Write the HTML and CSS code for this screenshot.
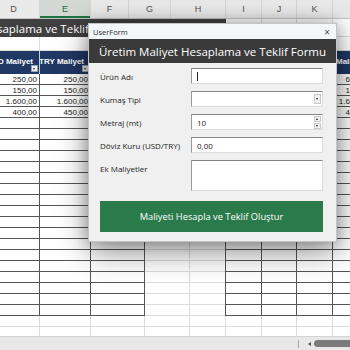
FILE: index.html
```html
<!DOCTYPE html>
<html>
<head>
    <title>Maliyet Hesaplama</title>
    <link rel="stylesheet" href="styles.css">
</head>

<body>
    <div class="sheet">
        <div class="col-heads">
            <div class="ch w-d">D</div>
            <div class="ch w-e selected">E</div>
            <div class="ch w-f">F</div>
            <div class="ch w-g">G</div>
            <div class="ch w-h">H</div>
            <div class="ch w-i">I</div>
            <div class="ch w-j">J</div>
            <div class="ch w-k">K</div>
            <div class="ch w-l">L</div>
        </div>

        <div class="grid">
            <!-- merged title row -->
            <div class="title-cell"><span>Üretim Maliyet Hesaplama ve Teklif Formu</span></div>
            <div class="c"></div>
            <div class="c"></div>
            <div class="c"></div>
            <div class="c"></div>

            <!-- blank row -->
            <div class="c"></div>
            <div class="c"></div>
            <div class="c"></div>
            <div class="c"></div>
            <div class="c"></div>
            <div class="c"></div>
            <div class="c"></div>
            <div class="c"></div>
            <div class="c"></div>

            <!-- table headers -->
            <div class="th">USD Maliyet<span class="filter"></span></div>
            <div class="th">TRY Maliyet<span class="filter"></span></div>
            <div class="th">Toplam<span class="filter"></span></div>
            <div class="c"></div>
            <div class="c edge"></div>
            <div class="th">Ürün<span class="filter"></span></div>
            <div class="th">Metraj<span class="filter"></span></div>
            <div class="th">Kur<span class="filter"></span></div>
            <div class="th left">Maliyet<span class="filter"></span></div>

            <!-- data rows -->
            <div class="c t num">250,00</div>
            <div class="c t num">250,00</div>
            <div class="c t num"></div>
            <div class="c"></div>
            <div class="c edge"></div>
            <div class="c t"></div>
            <div class="c t"></div>
            <div class="c t"></div>
            <div class="c t num">660,00</div>

            <div class="c t num">150,00</div>
            <div class="c t num">150,00</div>
            <div class="c t num"></div>
            <div class="c"></div>
            <div class="c edge"></div>
            <div class="c t"></div>
            <div class="c t"></div>
            <div class="c t"></div>
            <div class="c t num">150,00</div>

            <div class="c t num">1.600,00</div>
            <div class="c t num">1.600,00</div>
            <div class="c t num"></div>
            <div class="c"></div>
            <div class="c edge"></div>
            <div class="c t"></div>
            <div class="c t"></div>
            <div class="c t"></div>
            <div class="c t num">1.600,00</div>

            <div class="c t num">400,00</div>
            <div class="c t num">450,00</div>
            <div class="c t num"></div>
            <div class="c"></div>
            <div class="c edge"></div>
            <div class="c t"></div>
            <div class="c t"></div>
            <div class="c t"></div>
            <div class="c t num">400,00</div>

            <!-- empty bordered rows -->
            <div class="c t fill"></div>
            <div class="c t fill"></div>
            <div class="c t fill"></div>
            <div class="c fill-light"></div>
            <div class="c edge fill-light"></div>
            <div class="c t fill"></div>
            <div class="c t fill"></div>
            <div class="c t fill"></div>
            <div class="c t fill"></div>

            <!-- plain grid below the tables -->
            <div class="c fill-light"></div>
            <div class="c fill-light"></div>
            <div class="c fill-light"></div>
            <div class="c fill-light"></div>
            <div class="c fill-light"></div>
            <div class="c fill-light"></div>
            <div class="c fill-light"></div>
            <div class="c fill-light"></div>
            <div class="c fill-light"></div>
        </div>
    </div>

    <div class="statusbar">
        <span class="sep"></span>
        <span class="arrow"></span>
        <span class="thumb"></span>
    </div>

    <!-- VBA UserForm window over the sheet -->
    <div class="userform">
        <div class="uf-caption">
            <span>UserForm</span>
            <span class="uf-close">×</span>
        </div>
        <div class="uf-header">Üretim Maliyet Hesaplama ve Teklif Formu</div>
        <div class="uf-body">
            <div class="uf-fields">
                <label>Ürün Adı</label>
                <div class="box"><span class="caret"></span></div>

                <label>Kumaş Tipi</label>
                <div class="box"><span class="drop-btn"></span></div>

                <label>Metraj (mt)</label>
                <div class="box">10
                    <span class="spin">
                        <span class="spin-up"></span>
                        <span class="spin-down"></span>
                    </span>
                </div>

                <label>Döviz Kuru (USD/TRY)</label>
                <div class="box">0,00</div>

                <label class="top">Ek Maliyetler</label>
                <div class="box"></div>
            </div>
            <div class="uf-button">Maliyeti Hesapla ve Teklif Oluştur</div>
        </div>
    </div>
</body>
</html>
```

FILE: styles.css
```css
body {
    margin: 0;
    width: 350px;
    height: 350px;
    overflow: hidden;
    position: relative;
    background: #fff;
    font-family: "Liberation Sans", Arial, sans-serif;
}

.sheet {
    height: 336px;
    width: 380px;
    margin-left: -12px;
    overflow: hidden;
}

/* column letters */
.col-heads {
    display: flex;
    height: 19px;
    background: #e9e9e9;
    border-bottom: 1px solid #c4c4c4;
    box-sizing: border-box;
}

.ch {
    display: flex;
    align-items: center;
    justify-content: center;
    flex: none;
    box-sizing: border-box;
    border-right: 1px solid #d5d5d5;
    font-size: 9px;
    color: #505050;
}

.ch.selected {
    background: #d3d8d4;
    color: #1c6b3e;
    box-shadow: inset 0 -2px #217346;
}

.w-d { width: 52px; }
.w-e { width: 51px; }
.w-f { width: 38px; }
.w-g { width: 42px; }
.w-h { width: 55px; }
.w-i { width: 36px; }
.w-j { width: 35px; }
.w-k { width: 36px; }
.w-l { width: 40px; }

/* cells */
.grid {
    display: grid;
    grid-template-columns: 52px 51px 54px 45px 36px 36px 35px 36px 40px;
    grid-template-rows: 18px 14px 23px repeat(4, 11px) 198px 20px;
}

.c {
    box-sizing: border-box;
    border-right: 1px solid #dcdcdc;
    border-bottom: 1px solid #dcdcdc;
    font-size: 8px;
    color: #222;
}

.c.t {
    border-color: #555;
}

.c.edge {
    border-right-color: #555;
}

.num {
    display: flex;
    align-items: center;
    justify-content: flex-end;
    padding-right: 2px;
    white-space: nowrap;
}

.fill {
    border-bottom: none;
    background: repeating-linear-gradient(to bottom, transparent 0 10px, #555 10px 11px);
}

.fill-light {
    border-bottom: none;
    background: repeating-linear-gradient(to bottom, transparent 0 10px, #dcdcdc 10px 11px);
}

.title-cell {
    grid-column: 1 / 6;
    display: flex;
    align-items: center;
    overflow: hidden;
    background: #404040;
    color: #fff;
    font-family: "Open Sans", sans-serif;
    font-size: 11.5px;
    white-space: nowrap;
}

.title-cell span {
    margin-left: -88px;
}

.th {
    position: relative;
    display: flex;
    align-items: center;
    justify-content: flex-end;
    padding: 0 6px 3px 0;
    box-sizing: border-box;
    background: #203864;
    border-right: 1px solid #c9d0dc;
    color: #fff;
    font-size: 8px;
    font-weight: bold;
    white-space: nowrap;
    overflow: hidden;
}

.th.left {
    justify-content: flex-start;
    padding-left: 3px;
}

.filter {
    position: absolute;
    right: 1px;
    bottom: 2px;
    width: 7px;
    height: 7px;
    box-sizing: border-box;
    background: #eef0f3;
    border: 1px solid #9aa3b3;
}

.filter::after {
    content: "";
    position: absolute;
    left: 1px;
    top: 2px;
    border-left: 1.5px solid transparent;
    border-right: 1.5px solid transparent;
    border-top: 2px solid #333;
}

/* bottom bar */
.statusbar {
    display: flex;
    align-items: center;
    justify-content: flex-end;
    height: 14px;
    background: #e8e8e8;
    border-top: 1px solid #d3d3d3;
    box-sizing: border-box;
}

.sep {
    width: 1px;
    height: 8px;
    background: #a8a8a8;
    margin-right: 9px;
}

.arrow {
    width: 0;
    height: 0;
    border-top: 2.5px solid transparent;
    border-bottom: 2.5px solid transparent;
    border-right: 3px solid #555;
    margin-right: 3px;
}

.thumb {
    width: 40px;
    height: 7px;
    margin-right: -4px;
    border-radius: 4px;
    background: #7b7b7b;
}

/* user form */
.userform {
    position: absolute;
    left: 88px;
    top: 23px;
    width: 249px;
    height: 219px;
    box-sizing: border-box;
    background: #f0f0f0;
    border: 1px solid #c4c4c4;
    box-shadow: 0 10px 30px rgba(0, 0, 0, 0.42), 0 0 14px rgba(0, 0, 0, 0.25);
    font-family: "Open Sans", sans-serif;
}

.uf-caption {
    display: flex;
    align-items: center;
    justify-content: space-between;
    height: 15px;
    padding: 0 6px 0 4px;
    background: #f4f7fa;
    font-size: 7.5px;
    color: #2a2a2a;
}

.uf-close {
    font-size: 10px;
    color: #444;
}

.uf-header {
    display: flex;
    align-items: center;
    justify-content: center;
    height: 24px;
    background: #3a3a3a;
    color: #fff;
    font-size: 11.5px;
    white-space: nowrap;
}

.uf-body {
    padding: 5px 13px 0 11px;
}

.uf-fields {
    display: grid;
    grid-template-columns: 91px 132px;
    grid-template-rows: repeat(4, 16px) 31px;
    row-gap: 7px;
}

.uf-fields label {
    align-self: center;
    font-size: 8px;
    color: #222;
    white-space: nowrap;
}

.uf-fields label.top {
    align-self: start;
    padding-top: 3px;
}

.box {
    position: relative;
    display: flex;
    align-items: center;
    padding-left: 5px;
    box-sizing: border-box;
    background: #fff;
    border: 1px solid #dcdcdc;
    border-top-color: #858585;
    border-left-color: #9a9a9a;
    font-size: 8px;
    color: #222;
}

.caret {
    width: 1px;
    height: 9px;
    background: #222;
}

.drop-btn {
    position: absolute;
    right: 1px;
    top: 2px;
    width: 7px;
    height: 10px;
    box-sizing: border-box;
    background: #f2f2f2;
    border: 1px solid #c8c8c8;
}

.drop-btn::after,
.spin-down::after,
.spin-up::after {
    content: "";
    position: absolute;
    left: 1px;
    border-left: 1.5px solid transparent;
    border-right: 1.5px solid transparent;
}

.drop-btn::after,
.spin-down::after {
    top: 3px;
    border-top: 2px solid #222;
}

.spin {
    position: absolute;
    right: 1px;
    top: 0;
    bottom: 0;
    display: flex;
    flex-direction: column;
    justify-content: center;
    gap: 1px;
}

.spin-up,
.spin-down {
    position: relative;
    width: 7px;
    height: 6px;
    box-sizing: border-box;
    background: #f2f2f2;
    border: 1px solid #c8c8c8;
}

.spin-up::after {
    top: 1px;
    border-bottom: 2px solid #222;
}

.spin-down::after {
    top: 1px;
}

.uf-button {
    display: flex;
    align-items: center;
    justify-content: center;
    height: 31px;
    margin-top: 10px;
    background: #2a7a4b;
    color: #fff;
    font-size: 9.3px;
    white-space: nowrap;
}
```
